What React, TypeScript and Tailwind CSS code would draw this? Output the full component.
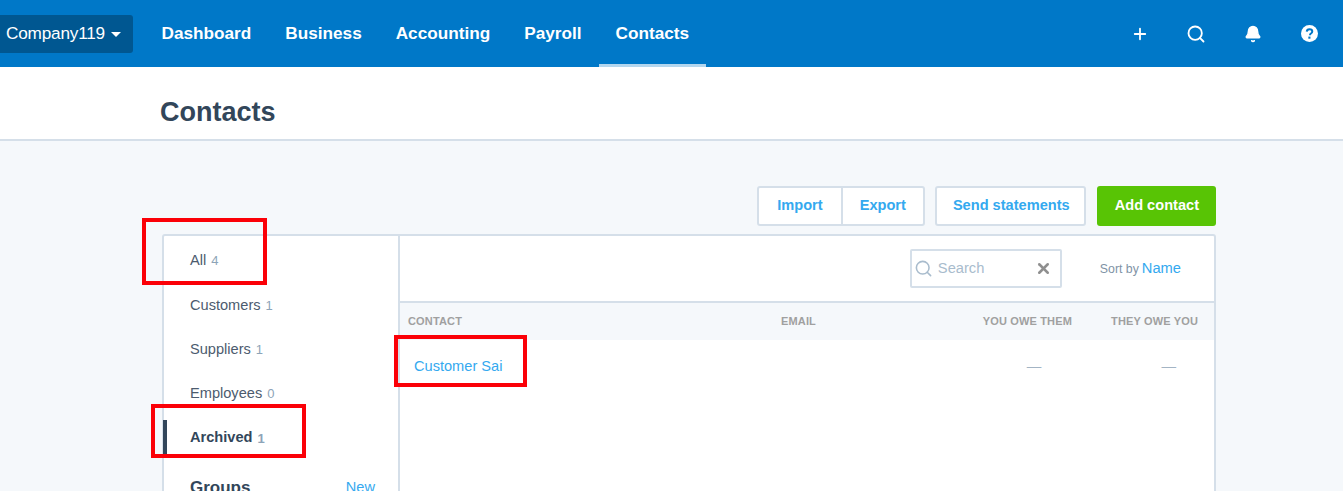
import { Bell, Plus, Search, X } from 'lucide-react';

const navItems = ['Dashboard', 'Business', 'Accounting', 'Payroll', 'Contacts'];

const filters = [
    { label: 'All', count: 4 },
    { label: 'Customers', count: 1 },
    { label: 'Suppliers', count: 1 },
    { label: 'Employees', count: 0 },
];

function RedBox({ className }: { className: string }) {
    return <div className={`absolute border-[4px] border-[#fb0007] ${className}`} />;
}

function HelpIcon() {
    return (
        <svg viewBox="0 0 16 16" className="h-[17px] w-[17px]">
            <circle cx="8" cy="8" r="8" fill="#fff" />
            <path d="M5.4 6.2C5.5 4.7 6.6 3.9 8 3.9c1.5 0 2.6.9 2.6 2.1 0 1-.6 1.5-1.3 2-.6.4-.8.7-.8 1.3v.3" fill="none" stroke="#0078c8" strokeWidth="1.9" />
            <rect x="6.9" y="10.9" width="2" height="2" fill="#0078c8" />
        </svg>
    );
}

export default function App() {
    return (
        <div className="relative h-[491px] overflow-hidden bg-[#f5f8fb] font-['Liberation_Sans',Arial,sans-serif]">
            <header className="flex h-[67px] items-start bg-[#0078c8] text-white">
                <button className="mt-[15px] flex h-[38px] w-[133px] items-center rounded-r-[3px] bg-[#005791] pl-[6px] text-[17.2px] tracking-[-0.2px]">
                    Company119
                    <span className="ml-[6px] h-0 w-0 border-x-[5px] border-t-[5px] border-x-transparent border-t-white" />
                </button>
                <nav className="ml-[11.5px] flex h-full">
                    {navItems.map((item) => (
                        <a
                            key={item}
                            className={`flex h-full items-center border-b-[3px] px-[17px] pt-[3px] text-[17.2px] font-bold ${item === 'Contacts' ? 'border-[#b3d6ee]' : 'border-transparent'}`}
                        >
                            {item}
                        </a>
                    ))}
                </nav>
                <div className="ml-auto mr-[25px] flex h-full items-center">
                    <Plus size={18} strokeWidth={2.4} />
                    <Search size={20} strokeWidth={2.2} className="ml-[37px]" />
                    <Bell size={18} fill="#fff" strokeWidth={2} className="ml-[38px]" />
                    <span className="ml-[39px]">
                        <HelpIcon />
                    </span>
                </div>
            </header>

            <div className="flex h-[74px] items-center border-b-2 border-[#d5dfe9] bg-white pl-[160px] pt-[19px]">
                <h1 className="text-[27px] font-bold text-[#32465a]">Contacts</h1>
            </div>

            <main className="ml-[162px] mr-[127px] pt-[45px]">
                <div className="flex justify-end text-[14.6px] font-bold">
                    <div className="flex h-[40px] rounded-[3px] border-2 border-[#d5dfe9] bg-white text-[#34a9ef]">
                        <a className="flex items-center border-r-2 border-[#d5dfe9] px-[18px]">Import</a>
                        <a className="flex items-center px-[17px]">Export</a>
                    </div>
                    <a className="ml-[10px] flex h-[40px] items-center rounded-[3px] border-2 border-[#d5dfe9] bg-white pl-[16px] pr-[14px] text-[#34a9ef]">
                        Send statements
                    </a>
                    <a className="ml-[11px] flex h-[40px] items-center rounded-[3px] bg-[#58c405] pl-[18px] pr-[17px] text-white">Add contact</a>
                </div>

                <div className="mt-[8px] flex h-[300px] rounded-t-[3px] border-2 border-[#d5dfe9] bg-white">
                    <aside className="w-[236px] shrink-0 border-r-2 border-[#d5dfe9] text-[14.6px] text-[#4c5b6e]">
                        <ul className="pt-[3px]">
                            {filters.map((f) => (
                                <li key={f.label} className="flex h-[44.3px] items-center pl-[26px]">
                                    {f.label}
                                    <span className="ml-[5px] text-[13px] text-[#8da4b8]">{f.count}</span>
                                </li>
                            ))}
                            <li className="relative flex h-[44.3px] items-center pl-[26px] font-bold text-[#32465a]">
                                <span className="absolute -left-[1px] top-[4px] h-[36px] w-[4px] bg-[#32465a]" />
                                Archived
                                <span className="ml-[5px] text-[13px] text-[#8da4b8]">1</span>
                            </li>
                        </ul>
                        <div className="mt-[15px] flex items-center justify-between pl-[26px] pr-[23px]">
                            <span className="text-[17px] font-bold text-[#32465a]">Groups</span>
                            <span className="text-[14.6px] text-[#34a9ef]">New</span>
                        </div>
                    </aside>

                    <section className="flex-1">
                        <div className="flex h-[67px] items-center justify-end border-b-2 border-[#d5dfe9]">
                            <div className="flex h-[39px] w-[152px] items-center rounded-[2px] border-2 border-[#d5dfe9] pl-[2px] pr-[8px]">
                                <Search size={19} strokeWidth={2} className="text-[#a9bccd]" />
                                <span className="ml-[5px] flex-1 text-[14.7px] text-[#a9bccd]">Search</span>
                                <X size={17} strokeWidth={3.6} className="text-[#8f8f8f]" />
                            </div>
                            <div className="ml-[38px] mr-[33px] flex items-baseline text-[12.3px] text-[#7f93a6]">
                                Sort by
                                <span className="ml-[3px] text-[14.7px] text-[#34a9ef]">Name</span>
                            </div>
                        </div>
                        <div className="flex h-[37px] items-center bg-[#f5f8fb] pl-[8px] pr-[16px] text-[11px] font-bold tracking-[0.15px] text-[#a0a0a0]">
                            <span className="w-[373px]">CONTACT</span>
                            <span>EMAIL</span>
                            <span className="ml-auto">YOU OWE THEM</span>
                            <span className="ml-[39px]">THEY OWE YOU</span>
                        </div>
                        <div className="flex h-[54px] items-center pl-[14px] text-[14.6px] text-[#34a9ef]">
                            Customer Sai
                            <span className="ml-auto text-[#a3b4c4]">—</span>
                            <span className="ml-[120px] mr-[38px] text-[#a3b4c4]">—</span>
                        </div>
                    </section>
                </div>
            </main>

            <RedBox className="left-[142px] top-[218px] h-[67px] w-[125px]" />
            <RedBox className="left-[151px] top-[404px] h-[54px] w-[155px]" />
            <RedBox className="left-[394px] top-[335px] h-[52px] w-[133px]" />
        </div>
    );
}
